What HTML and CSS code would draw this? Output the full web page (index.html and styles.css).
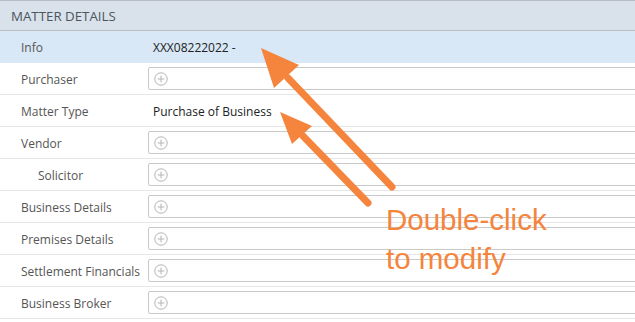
FILE: index.html
```html
<!DOCTYPE html>
<html lang="en">
<head>
    <meta charset="UTF-8">
    <meta name="viewport" content="width=device-width, initial-scale=1.0">
    <title>Matter Details</title>
    <link rel="stylesheet" href="styles.css">
</head>
<body>
    <div class="panel">
        <div class="panel-head">MATTER DETAILS</div>

        <div class="row selected">
            <div class="label">Info</div>
            <div class="value">XXX08222022 -</div>
        </div>
        <div class="row">
            <div class="label">Purchaser</div>
            <div class="value"><div class="picker"><svg class="plus" viewBox="0 0 14 14"><circle cx="7" cy="7" r="6.2"/><path d="M7 3.6v6.8M3.6 7h6.8"/></svg></div></div>
        </div>
        <div class="row">
            <div class="label">Matter Type</div>
            <div class="value">Purchase of Business</div>
        </div>
        <div class="row">
            <div class="label">Vendor</div>
            <div class="value"><div class="picker"><svg class="plus" viewBox="0 0 14 14"><circle cx="7" cy="7" r="6.2"/><path d="M7 3.6v6.8M3.6 7h6.8"/></svg></div></div>
        </div>
        <div class="row">
            <div class="label sub">Solicitor</div>
            <div class="value"><div class="picker"><svg class="plus" viewBox="0 0 14 14"><circle cx="7" cy="7" r="6.2"/><path d="M7 3.6v6.8M3.6 7h6.8"/></svg></div></div>
        </div>
        <div class="row">
            <div class="label">Business Details</div>
            <div class="value"><div class="picker"><svg class="plus" viewBox="0 0 14 14"><circle cx="7" cy="7" r="6.2"/><path d="M7 3.6v6.8M3.6 7h6.8"/></svg></div></div>
        </div>
        <div class="row">
            <div class="label">Premises Details</div>
            <div class="value"><div class="picker"><svg class="plus" viewBox="0 0 14 14"><circle cx="7" cy="7" r="6.2"/><path d="M7 3.6v6.8M3.6 7h6.8"/></svg></div></div>
        </div>
        <div class="row">
            <div class="label">Settlement Financials</div>
            <div class="value"><div class="picker"><svg class="plus" viewBox="0 0 14 14"><circle cx="7" cy="7" r="6.2"/><path d="M7 3.6v6.8M3.6 7h6.8"/></svg></div></div>
        </div>
        <div class="row">
            <div class="label">Business Broker</div>
            <div class="value"><div class="picker"><svg class="plus" viewBox="0 0 14 14"><circle cx="7" cy="7" r="6.2"/><path d="M7 3.6v6.8M3.6 7h6.8"/></svg></div></div>
        </div>
    </div>

    <!-- annotation drawn over the panel -->
    <svg class="arrows" width="635" height="322" viewBox="0 0 635 322">
        <line x1="392" y1="187" x2="288" y2="78"/>
        <polygon points="261,48 299,65 274,88"/>
        <line x1="368" y1="203" x2="303" y2="136"/>
        <polygon points="280,112 312,126 292,144"/>
    </svg>
    <div class="note">Double-click<br>to modify</div>
</body>
</html>
```

FILE: styles.css
```css
body {
    margin: 0;
    font-family: "Open Sans", "Noto Sans", sans-serif;
    background: #fff;
    overflow: hidden;
}

.panel {
    width: 635px;
    overflow: hidden;
}

.panel-head {
    height: 29px;
    line-height: 30px;
    padding-left: 11px;
    background: #d9e2ea;
    border-top: 1px solid #b9bec4;
    border-bottom: 1px solid #b9bec4;
    color: #4c5560;
    font-size: 13.3px;
}

.row {
    display: grid;
    grid-template-columns: 148px 1fr;
    height: 31px;
    border-bottom: 1px solid #e6e6e6;
    align-items: center;
    font-size: 12px;
}

.row.selected {
    background: #d8e8f6;
    border-bottom-color: #d8e8f6;
}

.label {
    padding-left: 21px;
    padding-top: 2px;
    color: #555;
    white-space: nowrap;
}

.label.sub {
    padding-left: 38px;
}

.value {
    padding-left: 5px;
    padding-top: 2px;
    color: #222;
}

.value:has(.picker) {
    padding-left: 0;
    padding-top: 0;
}

.picker {
    height: 21px;
    width: 500px;
    border: 1px solid #c9c9c9;
    border-radius: 2px;
    display: flex;
    align-items: center;
    padding-left: 5px;
}

.plus {
    width: 14px;
    height: 14px;
    fill: none;
    stroke: #b3b3b3;
    stroke-width: 1;
}

.arrows {
    position: absolute;
    left: 0;
    top: 0;
}

.arrows line {
    stroke: #f5843d;
    stroke-width: 7;
    stroke-linecap: round;
}

.arrows polygon {
    fill: #f5843d;
}

.note {
    position: absolute;
    left: 386px;
    top: 200px;
    font-family: "Liberation Sans", Arial, sans-serif;
    font-size: 29.5px;
    line-height: 39px;
    color: #f5843d;
}
```
